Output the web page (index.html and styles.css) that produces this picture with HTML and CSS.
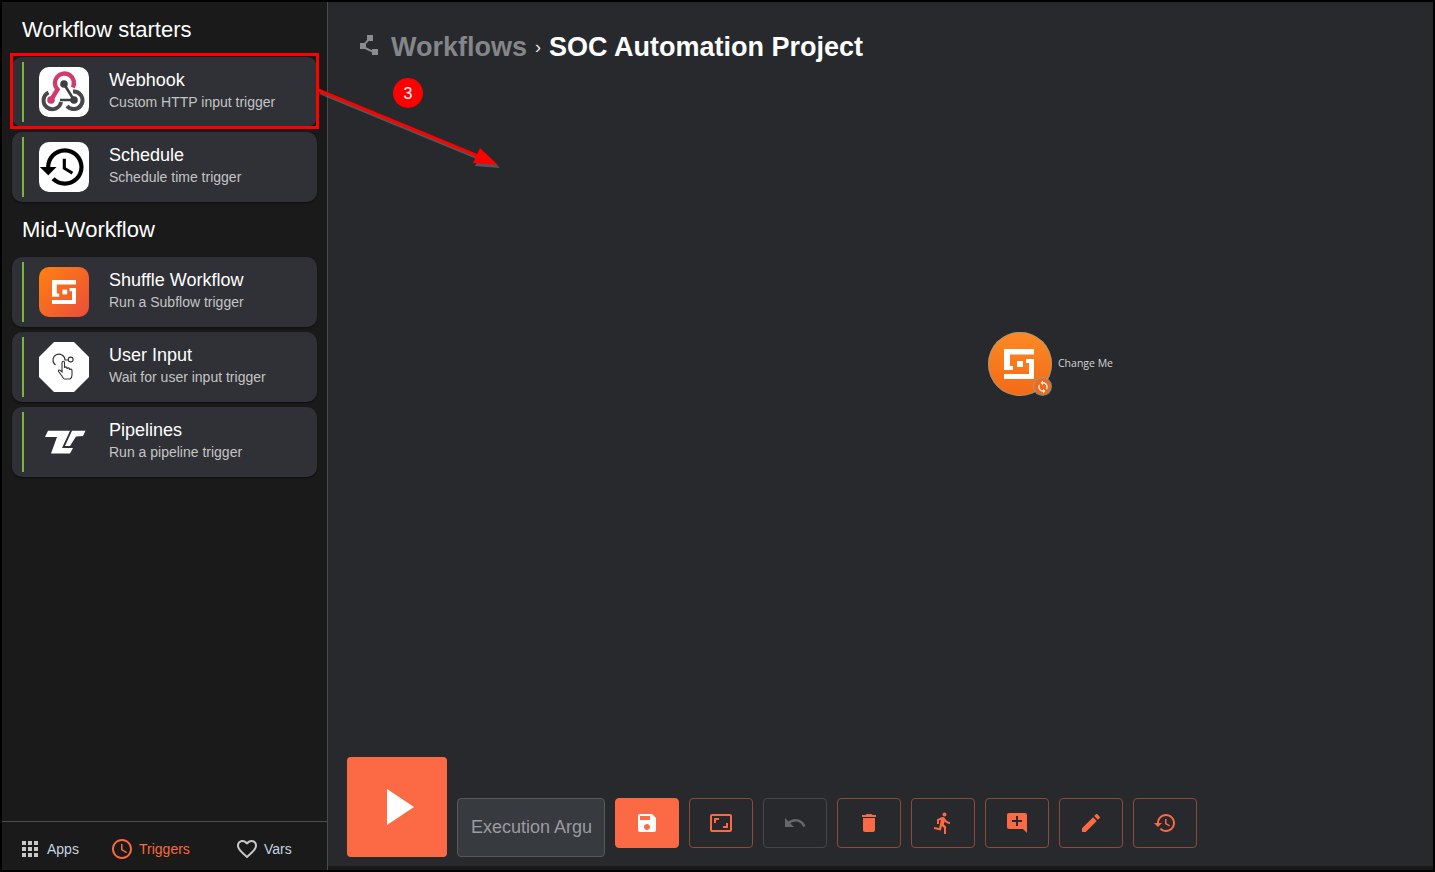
FILE: index.html
```html
<!DOCTYPE html>
<html lang="en">
<head>
<meta charset="utf-8">
<title>SOC Automation Project</title>
<link rel="stylesheet" href="styles.css">
</head>
<body>
<div class="frame">
  <aside class="sidebar">
    <div class="lists">
      <section class="group">
        <h2 class="group-title">Workflow starters</h2>
        <div class="card">
          <span class="bar"></span>
          <span class="icon icon-white">
            <svg viewBox="0 0 50 50" width="50" height="50">
              <g fill="none">
                <path d="M25 17 L35 33 H21" stroke="#3f3f42" stroke-width="2.600"/>
                <path d="M9.500 25.500 A8.800 8.800 0 1 0 22 35" stroke="#48484b" stroke-width="4"/>
                <path d="M34 24.500 A8.800 8.800 0 1 1 28 39" stroke="#48484b" stroke-width="4"/>
                <path d="M12 33 L18.500 22.500 A9.500 9.500 0 1 1 33.800 20.500" stroke="#d13b6b" stroke-width="4.400"/>
              </g>
              <circle cx="12" cy="33" r="3.800" fill="#d13b6b"/>
              <circle cx="25" cy="17" r="3.800" fill="#3f3f42"/>
              <circle cx="35" cy="33" r="3.800" fill="#3f3f42"/>
            </svg>
          </span>
          <div class="card-text"><div class="card-title">Webhook</div><div class="card-sub">Custom HTTP input trigger</div></div>
        </div>
        <div class="card">
          <span class="bar"></span>
          <span class="icon icon-white">
            <svg viewBox="0 0 24 24" width="50" height="50"><path transform="translate(-.6 0)" d="M13 3c-4.970 0-9 4.030-9 9H1l3.890 3.890.07.14L9 12H6c0-3.870 3.130-7 7-7s7 3.130 7 7-3.130 7-7 7c-1.930 0-3.680-.79-4.940-2.060l-1.420 1.420C8.270 19.990 10.510 21 13 21c4.970 0 9-4.030 9-9s-4.030-9-9-9zm-1 5v5l4.280 2.540.72-1.210-3.500-2.080V8H12z" fill="#000"/></svg>
          </span>
          <div class="card-text"><div class="card-title">Schedule</div><div class="card-sub">Schedule time trigger</div></div>
        </div>
      </section>
      <section class="group">
        <h2 class="group-title">Mid-Workflow</h2>
        <div class="card">
          <span class="bar"></span>
          <span class="icon icon-orange">
            <svg viewBox="0 0 50 50" width="50" height="50"><g fill="#fff" transform="translate(13 13) scale(.8) translate(-16 -17)"><path d="M16 17H46V22.500H22V34H25V38H16z"/><path d="M38 27H46V47H16V42H41V31H38z"/><path d="M29 29h6v6h-6z"/></g></svg>
          </span>
          <div class="card-text"><div class="card-title">Shuffle Workflow</div><div class="card-sub">Run a Subflow trigger</div></div>
        </div>
        <div class="card">
          <span class="bar"></span>
          <span class="icon icon-octagon">
            <svg viewBox="0 0 50 50" width="50" height="50" fill="none" stroke="#333" stroke-width="1.100">
              <path d="M16.500 23 A6 6 0 1 1 26 18 H29.300"/>
              <circle cx="31.700" cy="17.500" r="2.400"/>
              <path d="M23 34 L19.500 29.500 C19 28 20.500 27.500 21.500 28.500 L23 30 V20.500 C23 18.800 25.500 18.800 25.500 20.500 V26 C25.500 24.500 28 24.500 28 26 V27 C28 25.500 30.500 25.500 30.500 27 V28 C30.500 26.800 33 26.800 33 28.500 V33 C33 35 32 36.500 31 37 H25.500 C24.500 37 24 35.500 23 34 Z"/>
            </svg>
          </span>
          <div class="card-text"><div class="card-title">User Input</div><div class="card-sub">Wait for user input trigger</div></div>
        </div>
        <div class="card">
          <span class="bar"></span>
          <span class="icon">
            <svg viewBox="0 0 50 50" width="50" height="50"><g fill="#fff"><polygon points="9,13.700 31,13.700 23,31 34,31 31,36.500 12,36.500 18,20 6,20"/><polygon points="33,13.700 46.500,13.700 44,19 37,19.500 31,29 26,29"/></g></svg>
          </span>
          <div class="card-text"><div class="card-title">Pipelines</div><div class="card-sub">Run a pipeline trigger</div></div>
        </div>
      </section>
    </div>
    <nav class="tabs">
      <div class="tab tab-apps">
        <svg class="tab-icon" viewBox="0 0 24 24"><path d="M4 8h4V4H4v4zm6 12h4v-4h-4v4zm-6 0h4v-4H4v4zm0-6h4v-4H4v4zm6 0h4v-4h-4v4zm6-10v4h4V4h-4zm-6 4h4V4h-4v4zm6 6h4v-4h-4v4zm0 6h4v-4h-4v4z"/></svg>
        <span>Apps</span>
      </div>
      <div class="tab tab-triggers is-active">
        <svg class="tab-icon" viewBox="0 0 24 24"><path d="M11.990 2C6.470 2 2 6.480 2 12s4.470 10 9.990 10C17.520 22 22 17.520 22 12S17.520 2 11.990 2zM12 20c-4.420 0-8-3.580-8-8s3.580-8 8-8 8 3.580 8 8-3.580 8-8 8zm.5-13H11v6l5.250 3.150.75-1.230-4.500-2.670z"/></svg>
        <span>Triggers</span>
      </div>
      <div class="tab">
        <svg class="tab-icon" viewBox="0 0 24 24"><path d="M16.500 3c-1.740 0-3.410.81-4.500 2.090C10.910 3.810 9.240 3 7.500 3 4.420 3 2 5.420 2 8.500c0 3.780 3.400 6.860 8.550 11.540L12 21.350l1.450-1.320C18.600 15.360 22 12.280 22 8.500 22 5.420 19.580 3 16.500 3zm-4.400 15.550l-.1.1-.1-.1C7.140 14.240 4 11.390 4 8.500 4 6.500 5.500 5 7.500 5c1.540 0 3.040.99 3.570 2.360h1.870C13.460 5.990 14.960 5 16.500 5c2 0 3.500 1.500 3.500 3.500 0 2.890-3.140 5.740-7.900 10.050z"/></svg>
        <span>Vars</span>
      </div>
    </nav>
  </aside>

  <main class="main">
    <header class="crumbs">
      <svg class="crumb-icon" viewBox="0 0 24 24"><path d="M15 16v1.260l-6-3v-3.170L11.700 8H16V2h-6v4.900L7.300 10H3v6h5l7 3.500V22h6v-6z"/></svg>
      <span class="crumb-link">Workflows</span>
      <span class="crumb-sep">›</span>
      <span class="crumb-current">SOC Automation Project</span>
    </header>

    <div class="node">
      <span class="node-circle">
        <svg viewBox="0 0 64 64" width="64" height="64"><g fill="#fff"><path d="M16 17H46V22.500H22V34H25V38H16z"/><path d="M38 27H46V47H16V42H41V31H38z"/><path d="M29 29h6v6h-6z"/></g></svg>
        <span class="node-badge">
          <svg viewBox="0 0 24 24" width="14" height="14"><path fill="#fff" d="M12 4V1L8 5l4 4V6c3.310 0 6 2.690 6 6 0 1.010-.25 1.970-.7 2.800l1.460 1.460C19.540 15.030 20 13.570 20 12c0-4.420-3.580-8-8-8zm0 14c-3.310 0-6-2.690-6-6 0-1.010.25-1.970.7-2.800L5.240 7.740C4.460 8.970 4 10.430 4 12c0 4.420 3.580 8 8 8v3l4-4-4-4v3z"/></svg>
        </span>
      </span>
      <span class="node-label">Change Me</span>
    </div>

    <div class="toolbar">
      <button class="play" type="button"><svg viewBox="0 0 27 36" width="27" height="36"><polygon points="0,0 27,18 0,36" fill="#fff"/></svg></button>
      <div class="args">Execution Argu</div>
      <button class="tool tool-fill" type="button"><svg viewBox="0 0 24 24"><path d="M17 3H5c-1.110 0-2 .9-2 2v14c0 1.100.89 2 2 2h14c1.100 0 2-.9 2-2V7l-4-4zm-5 16c-1.660 0-3-1.340-3-3s1.340-3 3-3 3 1.340 3 3-1.340 3-3 3zm3-10H5V5h10v4z"/></svg></button>
      <button class="tool" type="button"><svg viewBox="0 0 24 24"><path d="M19 12h-2v3h-3v2h5v-5zM7 9h3V7H5v5h2V9zm14-6H3c-1.100 0-2 .9-2 2v14c0 1.100.9 2 2 2h18c1.100 0 2-.9 2-2V5c0-1.100-.9-2-2-2zm0 16.010H3V4.990h18v14.020z"/></svg></button>
      <button class="tool tool-off" type="button"><svg viewBox="0 0 24 24"><path d="M12.500 8c-2.650 0-5.050.99-6.900 2.600L2 7v9h9l-3.620-3.620c1.390-1.160 3.160-1.880 5.120-1.880 3.540 0 6.550 2.310 7.600 5.500l2.370-.78C21.080 11.030 17.150 8 12.500 8z"/></svg></button>
      <button class="tool" type="button"><svg viewBox="0 0 24 24"><path d="M6 19c0 1.100.9 2 2 2h8c1.100 0 2-.9 2-2V7H6v12zM19 4h-3.500l-1-1h-5l-1 1H5v2h14V4z"/></svg></button>
      <button class="tool" type="button"><svg viewBox="0 0 24 24"><path d="M13.490 5.480c1.100 0 2-.9 2-2s-.9-2-2-2-2 .9-2 2 .9 2 2 2zm-3.600 13.900l1-4.400 2.100 2v6h2v-7.500l-2.100-2 .6-3c1.300 1.500 3.300 2.500 5.500 2.500v-2c-1.900 0-3.500-1-4.300-2.400l-1-1.600c-.4-.6-1-1-1.700-1-.3 0-.5.1-.8.1l-5.200 2.200v4.700h2v-3.400l1.800-.7-1.600 8.100-4.900-1-.4 2 7 1.400z"/></svg></button>
      <button class="tool" type="button"><svg viewBox="0 0 24 24"><path d="M21.990 4c0-1.100-.89-2-1.990-2H4c-1.100 0-2 .9-2 2v12c0 1.100.9 2 2 2h14l4 4-.01-18zM17 11h-4v4h-2v-4H7V9h4V5h2v4h4v2z"/></svg></button>
      <button class="tool" type="button"><svg viewBox="0 0 24 24"><path d="M3 17.250V21h3.750L17.810 9.940l-3.750-3.750L3 17.250zM20.710 7.040c.39-.39.39-1.020 0-1.410l-2.340-2.340c-.39-.39-1.020-.39-1.410 0l-1.830 1.830 3.750 3.750 1.830-1.830z"/></svg></button>
      <button class="tool" type="button"><svg viewBox="0 0 24 24"><path d="M13 3c-4.970 0-9 4.030-9 9H1l3.890 3.890.07.14L9 12H6c0-3.870 3.130-7 7-7s7 3.130 7 7-3.130 7-7 7c-1.930 0-3.680-.79-4.940-2.060l-1.420 1.420C8.270 19.990 10.510 21 13 21c4.970 0 9-4.030 9-9s-4.030-9-9-9zm-1 5v5l4.280 2.540.72-1.210-3.500-2.080V8H12z"/></svg></button>
    </div>
  </main>

  <svg class="annotation" viewBox="0 0 1435 872" width="1435" height="872">
    <rect x="11.500" y="54.500" width="306" height="73" fill="none" stroke="#f00" stroke-width="3"/>
    <g opacity=".35" transform="translate(2 3)">
      <path d="M318 90 L478 156" stroke="#aaa" stroke-width="2.500"/>
      <polygon points="498,165 480,148 473,163" fill="#aaa"/>
    </g>
    <path d="M318 90 L478 156" stroke="#f00" stroke-width="3"/>
    <polygon points="498,165 480,148 473,163" fill="#f00"/>
  </svg>
  <span class="step">3</span>
</div>
</body>
</html>
```

FILE: styles.css
```css
* { box-sizing: border-box; }

html, body {
  margin: 0;
  height: 100%;
  overflow: hidden;
}

body {
  background: #000;
  font-family: "Liberation Sans", Arial, sans-serif;
  color: #fff;
}

.frame {
  position: relative;
  display: flex;
  width: 1435px;
  height: 872px;
  border: solid #000;
  border-width: 2px;
  background: #1a1a1a;
}

/* Sidebar */
.sidebar {
  display: flex;
  flex-direction: column;
  flex: 0 0 326px;
  border-right: 1px solid #4a4a4a;
  background: #1a1a1a;
}

.lists {
  flex: 1;
  padding: 15px 10px 0;
}

.group { margin-bottom: 15px; }

.group-title {
  margin: 0 0 15px 10px;
  font-size: 22px;
  line-height: 25px;
  font-weight: 400;
}

.card {
  display: flex;
  align-items: center;
  height: 70px;
  margin-bottom: 5px;
  padding-left: 10px;
  border-radius: 10px;
  background: #2f3136;
  box-shadow: 0 1px 2px rgba(0, 0, 0, .5);
}

.group .card:last-child { margin-bottom: 0; }

.bar {
  flex: none;
  width: 2px;
  height: 60px;
  background: #7cb342;
}

.icon {
  flex: none;
  width: 50px;
  height: 50px;
  margin: 0 20px 0 15px;
  border-radius: 10px;
}

.icon svg { display: block; }

.icon-white { background: #fff; }

.icon-orange { background: linear-gradient(135deg, #ff8110, #ea4d3c); }

.icon-octagon {
  background: #fff;
  border-radius: 0;
  clip-path: polygon(30% 0, 70% 0, 100% 30%, 100% 70%, 70% 100%, 30% 100%, 0 70%, 0 30%);
}

.card-text { padding-bottom: 4px; }

.card-title {
  font-size: 18px;
  line-height: 22px;
  color: #fff;
}

.card-sub {
  margin-top: 2px;
  font-size: 14px;
  line-height: 18px;
  color: #c4c4c4;
}

.tabs {
  display: flex;
  align-items: center;
  height: 49px;
  padding: 6px 0 0 16px;
  border-top: 1px solid #4d4d4d;
}

.tab {
  display: flex;
  align-items: center;
  gap: 5px;
  font-size: 14px;
  color: #c4d4e4;
}

.tab-apps { width: 92px; }
.tab-triggers { width: 125px; }

.tab-icon {
  width: 24px;
  height: 24px;
  fill: #c8c8c8;
}

.tab.is-active { color: #f86a3e; }
.tab.is-active .tab-icon { fill: #f86a3e; }

/* Main canvas */
.main {
  position: relative;
  display: flex;
  flex-direction: column;
  flex: 1;
  margin-bottom: 4px;
  background: #27292d;
}

.crumbs {
  display: flex;
  align-items: center;
  height: 30px;
  margin: 30px 0 0 29px;
}

.crumb-icon {
  width: 24px;
  height: 24px;
  margin-right: 10px;
  margin-top: -4px;
  fill: #8a8c90;
}

.crumb-link,
.crumb-current {
  font-size: 27px;
  line-height: 30px;
  font-weight: 700;
}

.crumb-link { color: #84868a; }

.crumb-sep {
  margin: 0 8px;
  font-size: 18px;
  color: #e8e8e8;
}

.crumb-current { color: #fff; }

.node {
  position: absolute;
  left: 660px;
  top: 330px;
  display: flex;
  align-items: center;
  gap: 6px;
}

.node-circle {
  position: relative;
  display: block;
  width: 64px;
  height: 64px;
  border-radius: 50%;
  background: linear-gradient(180deg, #fb8a24, #f36a17);
  box-shadow: inset 0 0 0 1px rgba(120, 170, 170, .6);
}

.node-circle > svg { display: block; }

.node-badge {
  position: absolute;
  left: 46px;
  top: 46px;
  display: flex;
  align-items: center;
  justify-content: center;
  width: 17px;
  height: 17px;
  border-radius: 50%;
  background: #f0691e;
  box-shadow: 0 0 0 1px rgba(120, 170, 170, .8);
}

.node-label {
  margin-bottom: 2px;
  font-family: "Open Sans", sans-serif;
  font-size: 10.500px;
  color: #d4d4d4;
}

.toolbar {
  display: flex;
  align-items: flex-end;
  gap: 10px;
  margin-top: auto;
  padding: 0 0 9px 19px;
}

.play {
  display: flex;
  align-items: center;
  justify-content: center;
  width: 100px;
  height: 100px;
  padding: 0 0 0 7px;
  border: 0;
  border-radius: 4px;
  background: #fb6a44;
}

.args {
  width: 148px;
  height: 59px;
  padding: 0 13px;
  overflow: hidden;
  border: 1px solid #55585c;
  border-radius: 4px;
  background: #373a3f;
  font-size: 18px;
  line-height: 57px;
  white-space: nowrap;
  color: #9a9c9f;
}

.tool {
  display: flex;
  align-items: center;
  justify-content: center;
  width: 64px;
  height: 50px;
  margin-bottom: 9px;
  padding: 0;
  border: 1px solid #8c4a38;
  border-radius: 4px;
  background: transparent;
}

.tool svg {
  width: 24px;
  height: 24px;
  fill: #fb6a44;
}

.tool-fill {
  border-color: #fb6a44;
  background: #fb6a44;
}

.tool-fill svg { fill: #fff; }

.tool-off { border-color: #44464a; }
.tool-off svg { fill: #66686b; }

/* Annotation overlay */
.annotation {
  position: absolute;
  left: -2px;
  top: -2px;
  pointer-events: none;
}

.step {
  position: absolute;
  left: 391px;
  top: 76px;
  width: 30px;
  height: 30px;
  border-radius: 50%;
  background: #f00;
  font-size: 16px;
  line-height: 32px;
  text-align: center;
  color: #fff;
}
```
